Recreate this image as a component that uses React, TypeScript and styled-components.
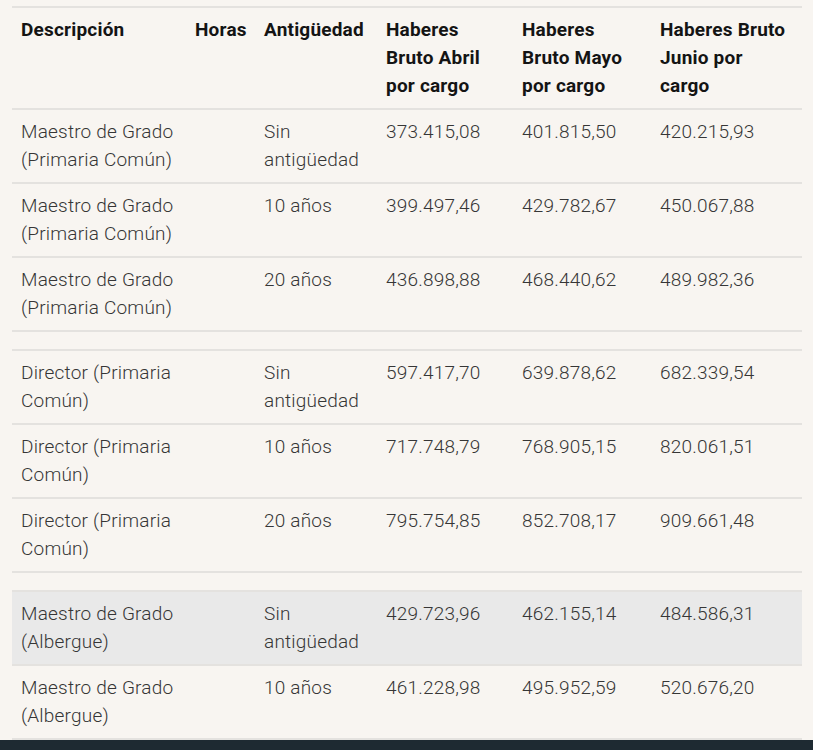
import React from "react";
import styled, { createGlobalStyle } from "styled-components";

const GlobalStyle = createGlobalStyle`
    html, body {
        margin: 0;
        padding: 0;
        background: #f8f5f1;
    }
    body {
        font-family: Roboto, "Noto Sans", sans-serif;
    }
`;

const Page = styled.div`
    padding: 6px 11px 0 12px;
    height: 750px;
    box-sizing: border-box;
    overflow: hidden;
    display: flex;
    flex-direction: column;
`;

const Table = styled.table`
    width: 790px;
    border-collapse: collapse;
    table-layout: fixed;
    border-top: 2px solid #e4e2df;
`;

const Th = styled.th<{ $w: number }>`
    box-sizing: border-box;
    width: ${(p) => p.$w}px;
    text-align: left;
    vertical-align: top;
    padding: 8px 9px;
    font-size: 19px;
    line-height: 28px;
    letter-spacing: 0.2px;
    font-weight: 700;
    color: #141414;
    border-bottom: 2px solid #e4e2df;
`;

const Tr = styled.tr<{ $shaded?: boolean }>`
    background: ${(p) => (p.$shaded ? "#e9e9e9" : "transparent")};
`;

const Td = styled.td`
    vertical-align: top;
    padding: 8px 9px;
    font-size: 19px;
    line-height: 28px;
    letter-spacing: 0.2px;
    font-weight: 300;
    color: #363636;
    border-bottom: 2px solid #e4e2df;
`;

const SpacerCell = styled.td`
    height: 17px;
    padding: 0;
    border-bottom: 2px solid #e4e2df;
`;

const Footer = styled.div`
    margin-left: -12px;
    margin-right: -11px;
    flex: 1;
    background: #1e2a32;
`;

type Row = string[] | null;

const columns: [string, number][] = [
    ["Descripción", 174],
    ["Horas", 69],
    ["Antigüedad", 122],
    ["Haberes Bruto Abril por cargo", 136],
    ["Haberes Bruto Mayo por cargo", 138],
    ["Haberes Bruto Junio por cargo", 151],
];

const rows: Row[] = [
    ["Maestro de Grado (Primaria Común)", "", "Sin antigüedad", "373.415,08", "401.815,50", "420.215,93"],
    ["Maestro de Grado (Primaria Común)", "", "10 años", "399.497,46", "429.782,67", "450.067,88"],
    ["Maestro de Grado (Primaria Común)", "", "20 años", "436.898,88", "468.440,62", "489.982,36"],
    null,
    ["Director (Primaria Común)", "", "Sin antigüedad", "597.417,70", "639.878,62", "682.339,54"],
    ["Director (Primaria Común)", "", "10 años", "717.748,79", "768.905,15", "820.061,51"],
    ["Director (Primaria Común)", "", "20 años", "795.754,85", "852.708,17", "909.661,48"],
    null,
    ["Maestro de Grado (Albergue)", "", "Sin antigüedad", "429.723,96", "462.155,14", "484.586,31"],
    ["Maestro de Grado (Albergue)", "", "10 años", "461.228,98", "495.952,59", "520.676,20"],
];

export default function App() {
    return (
        <>
            <GlobalStyle />
            <Page>
                <Table>
                    <thead>
                        <tr>
                            {columns.map(([label, w]) => (
                                <Th key={label} $w={w}>{label}</Th>
                            ))}
                        </tr>
                    </thead>
                    <tbody>
                        {rows.map((row, i) =>
                            row === null ? (
                                <Tr key={i}>
                                    <SpacerCell colSpan={6} />
                                </Tr>
                            ) : (
                                <Tr key={i} $shaded={i === 8}>
                                    {row.map((cell, j) => (
                                        <Td key={j}>{cell}</Td>
                                    ))}
                                </Tr>
                            )
                        )}
                    </tbody>
                </Table>
                <Footer />
            </Page>
        </>
    );
}
